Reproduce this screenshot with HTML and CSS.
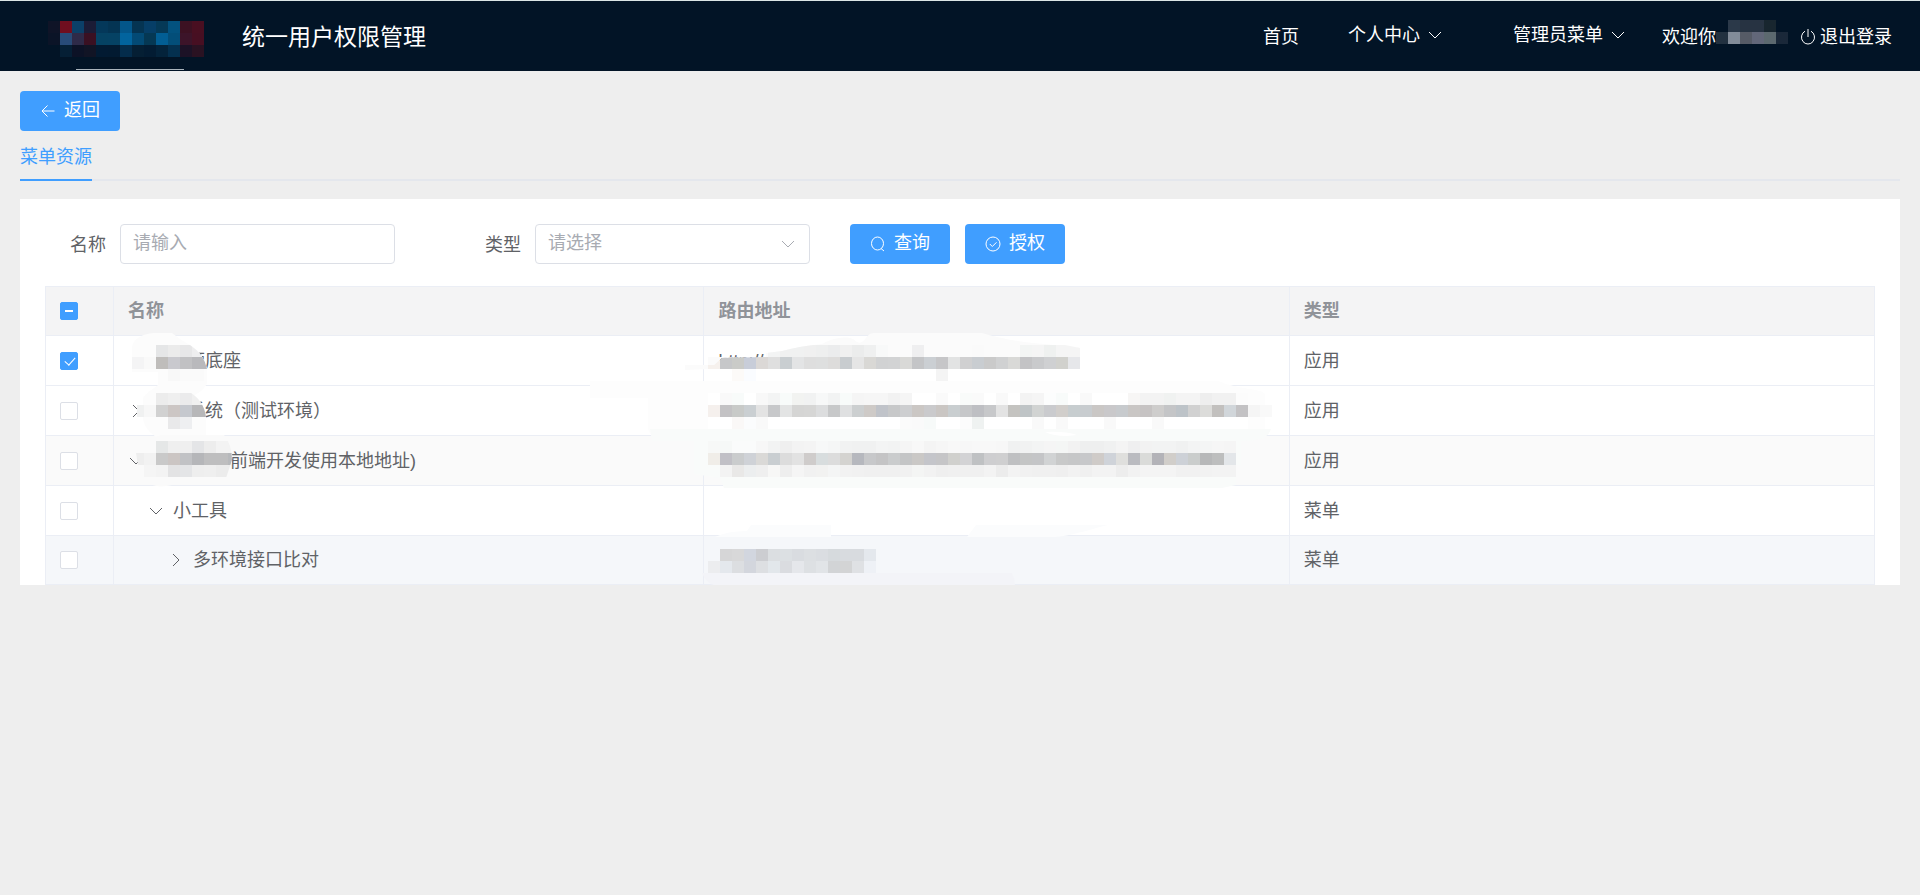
FILE: index.html
```html
<!DOCTYPE html>
<html lang="zh-CN">
<head>
<meta charset="utf-8">
<title>统一用户权限管理</title>
<link rel="stylesheet" href="styles.css">
</head>
<body>
<header class="topbar">
  <div class="brand">
    <svg class="logo" width="160" height="52" viewBox="44 18 160 52" aria-hidden="true">
      <g data-mosaic="logo"></g>
      <path d="M76 69.500H184" stroke="#aab4bc" stroke-width="1"/>
    </svg>
    <h1 class="title">统一用户权限管理</h1>
  </div>
  <nav class="nav">
    <a class="nav-link home" href="#">首页</a>
    <a class="nav-link menu" href="#">个人中心<svg class="chev" viewBox="0 0 16 16"><path d="M2 5l6 6 6-6"/></svg></a>
    <a class="nav-link menu admin" href="#">管理员菜单<svg class="chev" viewBox="0 0 16 16"><path d="M2 5l6 6 6-6"/></svg></a>
    <span class="welcome">欢迎你<svg class="user-mask" width="84" height="24" viewBox="1704 21 84 24" aria-hidden="true"><g data-mosaic="user"></g></svg></span>
    <a class="nav-link logout" href="#"><svg class="power" viewBox="0 0 16 18"><path d="M8 1v8M5 3.200a6.500 6.800 0 1 0 6 0"/></svg>退出登录</a>
  </nav>
</header>
<main class="page">
  <button class="btn back" type="button"><svg class="ico" viewBox="0 0 16 16"><path d="M14.500 8H2M7.500 2.500L2 8l5.500 5.500"/></svg>返回</button>
  <div class="tabs"><a class="tab" href="#">菜单资源</a></div>
  <section class="card">
    <form class="filters">
      <label class="label" for="name">名称</label>
      <input class="field" id="name" type="text" placeholder="请输入">
      <label class="label second" for="type">类型</label>
      <span class="select-wrap">
        <select class="field" id="type"><option>请选择</option></select>
        <svg class="chev" viewBox="0 0 16 16"><path d="M2 5l6 6 6-6"/></svg>
      </span>
      <div class="actions">
        <button class="btn" type="button"><svg class="ico" viewBox="0 0 16 16"><ellipse cx="7.500" cy="7.500" rx="6" ry="6.500"/><path d="M11 12.500l3 2.500"/></svg>查询</button>
        <button class="btn" type="button"><svg class="ico" viewBox="0 0 16 16"><circle cx="8" cy="8" r="7"/><path d="M4.800 8l2.500 2.500 4.200-4.200"/></svg>授权</button>
      </div>
    </form>
    <div class="table-wrap">
      <table class="grid">
        <colgroup><col class="c-check"><col><col class="c-wide"><col class="c-wide"></colgroup>
        <thead>
          <tr><th><input class="check partial" type="checkbox" aria-label="全选"></th><th>名称</th><th>路由地址</th><th>类型</th></tr>
        </thead>
        <tbody>
          <tr><td><input class="check" type="checkbox" checked aria-label="选择"></td><td><div class="node"><span class="toggle"></span><span class="gap"></span>频底座</div></td><td>http://</td><td>应用</td></tr>
          <tr><td><input class="check" type="checkbox" aria-label="选择"></td><td><div class="node"><svg class="toggle" viewBox="0 0 16 16"><path d="M5 2l6 6-6 6"/></svg><span class="gap"></span>系统（测试环境）</div></td><td></td><td>应用</td></tr>
          <tr class="striped"><td><input class="check" type="checkbox" aria-label="选择"></td><td><div class="node"><svg class="toggle" viewBox="0 0 16 16"><path d="M2 5l6 6 6-6"/></svg><span class="gap long"></span>前端开发使用本地地址)</div></td><td></td><td>应用</td></tr>
          <tr><td><input class="check" type="checkbox" aria-label="选择"></td><td><div class="node level-1"><svg class="toggle" viewBox="0 0 16 16"><path d="M2 5l6 6 6-6"/></svg>小工具</div></td><td></td><td>菜单</td></tr>
          <tr class="hovered"><td><input class="check" type="checkbox" aria-label="选择"></td><td><div class="node level-2"><svg class="toggle" viewBox="0 0 16 16"><path d="M5 2l6 6-6 6"/></svg>多环境接口比对</div></td><td></td><td>菜单</td></tr>
        </tbody>
      </table>
      <svg class="mask" width="1260" height="299" viewBox="45 286 1260 299" aria-hidden="true">
        <clipPath id="name-clip">
          <path d="M130 340H182L190 345Q204 354 207 369V383H130zM137 391H188Q204 400 206 417V430H137zM136 453L140 453V436H224Q232 444 232 460L226 478H140z"/>
        </clipPath>
        <clipPath id="url-clip">
          <path d="M700 365H714L722 358L766 357V353L782 351Q800 346 822 344H1060L1080 348V585H700z"/>
          <path d="M1080 385H1290V585H1080z"/>
        </clipPath>
        <path fill="#fcfcfc" d="M132 352C130 338 145 333 156 333h16L180 339L190 345Q204 354 207 368V383Q205 390 193 396Q204 404 206 417V438H158C148 432 143 425 143 417V398C148 391 152 390 158 385V372H132z"/>
        <path fill="#fafafa" d="M136 460V453h4c3-12 12-16 22-18h62c8 8 10 22 7 30l-6 12-53 8c-8 2-16 2-22-1L144 477V462z"/>
        <path fill="#fbfbfb" d="M685 370V365H714L722 358L766 357V353L782 351Q800 346 822 344C832 338 845 336 853 339c4 3 6 5 9 3 5-4 6-9 12-9h108c40 12 68 10 98 15v9H708v12z"/>
        <path fill="#fdfdfd" d="M590 381H1218C1240 390 1260 388 1265 394V429h-6l-18 12H700C660 441 650 438 648 429V398H590z"/>
        <path fill="#fff" d="M708 369H1100V381H708zM708 393H1248V429H708z"/>
        <path fill="#f9fbfa" d="M650 429H1271C1268 438 1260 441 1241 441v24H1236V485l-14 3H724l-4-10-26-4V441H652z"/>
        <path fill="#fff" d="M1045 432q20-1 32 3l-10 1q-14 0-22-4z"/>
        <path fill="#fbfcfd" d="M715 537q12-6 32-6l4-6h80v12zM967 537l9-12h132c-10 2-36 11-53 12z"/>
        <path fill="#f3f4f8" d="M702 573H1012q3 6 3 12H714q-8-2-12-12z"/>
        <g data-mosaic="names" clip-path="url(#name-clip)"></g>
        <g data-mosaic="urls" clip-path="url(#url-clip)"></g>
      </svg>
    </div>
  </section>
</main>
<script src="mosaic.js"></script>
</body>
</html>
```
FILE: styles.css
```css
* { box-sizing: border-box; }
body {
  margin: 0;
  min-height: 100vh;
  background: #eee;
  color: #606266;
  font: 400 18px/24px "Liberation Sans", "Noto Sans CJK SC", sans-serif;
}
svg { fill: none; stroke: none; flex: none; }
a { color: inherit; text-decoration: none; }
input, select, button { font: inherit; }

.topbar {
  display: flex;
  justify-content: space-between;
  height: 71px;
  background: #021426;
  border-top: 1px solid #dbe5e5;
  color: #fff;
  padding: 0 28px 0 44px;
}
.brand { display: flex; align-items: center; gap: 38px; }
.logo { margin-top: 16px; }
.title { margin: 0; padding-top: 2px; font-size: 23px; line-height: 32px; font-weight: 400; }
.nav { display: flex; align-items: center; padding-top: 2px; }
.nav-link { display: flex; align-items: center; }
.home { margin-right: 49px; }
.menu { gap: 7px; margin-right: 70px; padding-bottom: 4px; }
.admin { margin-right: 36px; }
.welcome { display: flex; align-items: center; position: relative; width: 138px; }
.user-mask { position: absolute; left: 42px; top: -5px; }
.logout { gap: 4px; }
.power { width: 16px; height: 18px; stroke: #fff; stroke-width: 1; }
.chev { width: 16px; height: 16px; stroke: currentColor; stroke-width: 1; }

.page { padding: 20px; }
.btn {
  display: inline-flex;
  align-items: center;
  justify-content: center;
  gap: 8px;
  width: 100px;
  height: 40px;
  padding: 0 0 2px;
  border: 0;
  border-radius: 4px;
  background: #409eff;
  color: #fff;
}
.ico { width: 16px; height: 16px; stroke: #fff; stroke-width: 1; margin-top: 2px; }
.back { display: flex; }
.tabs { display: flex; height: 50px; border-bottom: 2px solid #e4e7ed; }
.tab { height: 50px; padding-top: 14px; color: #409eff; border-bottom: 2px solid #409eff; }

.card { margin-top: 18px; padding: 25px 25px 0; background: #fff; }
.filters { display: flex; align-items: center; height: 40px; margin-bottom: 22px; padding-left: 25px; }
.label { width: 50px; padding-top: 2px; }
.second { margin-left: 90px; }
.field {
  width: 275px;
  height: 40px;
  padding: 0 12px 2px;
  border: 1px solid #dcdfe6;
  border-radius: 4px;
  background: #fff;
  color: #a8abb2;
  appearance: none;
  outline: 0;
}
.field::placeholder { color: #a8abb2; }
.select-wrap { position: relative; }
.select-wrap .chev { position: absolute; right: 14px; top: 12px; color: #a8abb2; }
.actions { display: flex; gap: 15px; margin-left: 40px; }

.table-wrap { position: relative; }
.grid { width: 100%; table-layout: fixed; border-collapse: collapse; }
.c-check { width: 68px; }
.c-wide { width: 32%; }
.grid th, .grid td {
  height: 50px;
  padding: 0 14px;
  border: 1px solid #ebeef5;
  text-align: left;
}
.grid th { height: 49px; background: #f4f4f5; color: #909399; font-weight: 700; }
.grid tr:last-child td { height: 49px; }
.striped { background: #fafafa; }
.hovered { background: #f5f7fa; }
.check {
  display: block;
  appearance: none;
  width: 18px;
  height: 18px;
  margin: 0;
  border: 1px solid #dcdfe6;
  border-radius: 2px;
  background: #fff;
}
.check:checked, .partial { border-color: #409eff; background: #409eff; }
.partial::after { content: ""; display: block; width: 8px; height: 2px; margin: 7px 4px; background: #fff; }
.check:checked::after {
  content: "";
  display: block;
  width: 5px;
  height: 9px;
  margin: 2px 0 0 6px;
  border: solid #fff;
  border-width: 0 1px 1px 0;
  transform: rotate(42deg);
}
.node { display: flex; align-items: center; }
.toggle { width: 16px; height: 16px; margin-right: 9px; stroke: #606266; stroke-width: 1; }
.level-1 { padding-left: 20px; }
.level-2 { padding-left: 40px; }
.gap { width: 34px; }
.long { width: 77px; }
.mask { position: absolute; left: 0; top: 0; pointer-events: none; }
```
FILE: mosaic.js
```js
// Rows of 12px tiles: x, y, then one colour per tile ("-" leaves a tile empty).
const TILE = 12;
const mosaics = {
  logo: [
    [48, 21, "0f1427 700e1f 0b4068 1b1c36 04385a 043453 03568a 053452 063e67 053957 03527f 3c1122 490f21"],
    [48, 33, "0b1427 284b78 2e2a48 3a1022 054263 054264 02649e 034a75 053854 025e94 034e79 3c1429 470f22"],
    [48, 45, "021426 051f35 0c1226 111425 021a32 021a31 042c4b 051f34 031c33 04233b 04304f 1c1226 2a1222"]
  ],
  user: [
    [1728, 21, "2b3949 273342 273342 18262f"],
    [1716, 33, "223140 828c99 565b66 626779 5c696f 1a2839"]
  ],
  names: [
    [156, 345, "e5e6e7 ebebeb e7e7e8 eeeeef f0f0f0"],
    [132, 357, "f4f4f5 f9f9f9 bfbdbb c9c9ce c1c1c3 b9b9bc b9b9bc"],
    [168, 369, "f8f8f8 fafafa fafafa"],
    [156, 393, "ececec efefef ebebec f0f0f0 f0f0f0"],
    [132, 405, "f0f1f1 f7f7f7 d1d1d1 ccc6c4 c5c8ce b7b7b9 b7b7b9"],
    [168, 417, "e9e9ea eeeff1"],
    [156, 441, "e5e7e7 efefef efefef e4e5e7 ededed f3f3f3 f3f3f3"],
    [132, 453, "eeeeee f2f2f2 c9c9c9 cbc5c3 c1c2c5 b5b6b9 bebebf bebebf b7b9bc"],
    [144, 465, "f5f5f5 f3f3f3 e3e3e4 e4e5e7 eeeeee efefef ececec ececec"]
  ],
  urls: [
    [768, 345, "f3f4f4 f0f1f1 f0f1f1 f0f0f0 eeefef ebeced f0f0f0 ebecec eff0f0 f8f9f9 - - efeff0 - - - - fafafa - - - f3f5f4 f5f5f5 eff1f0 f5f5f5 f5f5f5"],
    [708, 357, "f6f1ed c6c7c9 cacbc8 c8cdd9 dbd8d6 dfdfdf c9ced1 e3e4e5 dedede dedfdf dddcdb c8cccf e5e5e5 d9d8d5 d1d2d3 d2d3d4 d9d9d7 c4c5c7 cbcfd3 c6c6c8 e2e3e3 d0d0d1 c9cdd1 cacaca d0d1d2 d9d9d7 c3c3c5 c9cacc cfd0d2 d1d1cd e6e7ea"],
    [732, 369, "fcfaf8 fafcff - - - - - - - - - - - - - - - f4f4f4"],
    [720, 393, "f9f9f9 f8fbfa ffffff f8f8f8 f3f4f4 f8fbfa f2f3f1 f1f2f2 f7f8f8 f2f3f3 f8fbfa f5f5f5 f6f6f6 f6f6f6 f2f2f2 f5f5f5 - - fafafa - f9fbfa fafafa - f9f9f9 - f3f3f3 f5f5f5 fcfdfd f8fbfa - f9f9f9 - - - f7f6f5 f3f3f3 f3f3f3 f0f2f1 f4f4f4 f4f4f4 eeeeee f1f1f1 f1f1f1 fcfcfc"],
    [708, 405, "f5f0ed c3c2c4 c8cac8 cacfd2 e3e3e3 c7c8ca e3e4e4 d5d5d4 d6d6d5 dcddde c7c8c9 dfe0e1 cccfd0 cecac7 c0c3c9 c7c8c9 cdced0 cbc7c4 cacacc cac6c3 c9ced0 c6c7c9 bebfc3 c7c8ca e3e3e3 c4c3c0 bfc4c6 d1d3d2 cacbce d1cecb c7cdcf c8cccf cac7c5 c9c8ca c7cacd c9c6c4 c6c3c3 cecdcc c4c5c7 bdc3c8 d1d1d1 dcdcda c2c0be d1d6da c3c2c4 f5f5f5 f9f9f9"],
    [732, 417, "faf8f7 fbfcfd f9f9f9 - - - - - - - - - - - fbfbfb fafafa f7faf9 - - fcfcfc eff2f1 - - - - f9f9f9 - f9f9f9 - - - f9f9f9 - - - f9f9f9"],
    [708, 441, "f7f8f7 f6f8f7 fafbfb fafbfb f7f7f7 f2f3f3 efefef f3f3f3 f4f4f4 f7f8f8 f5f6f6 f1f2f2 f0f1f1 f0f1f1 f3f4f4 f2f3f3 f5f5f5 f8f8f8 f4f4f4 f6f6f6 f8f8f8 f7f7f7 f8f8f8 f8f8f8 f7f7f7 f0f1f1 f1f2f2 f3f4f4 f5f5f5 f4f6f5 f2f2f2 eeefef eeefef f0f1f1 f4f4f4 efeff0 f2f2f2 f2f3f3 f2f3f3 f0f1f1 f3f4f4 f4f5f5 f6f6f6 f5f5f5"],
    [708, 453, "f0ede8 c1c0c6 cacccd cfd2d7 dad9d7 c9ced1 dcdcdc e2e2e2 cfcccb d8ddde dcdcdc d4d3d0 b6b8be c7c8ca c4c4c5 cacccd c4c5c6 cac8c6 c4c5ca c5c5c7 d0d0cd d3d3d5 bfc1c3 ceced0 cfcfd0 bfc0c2 c4c5c5 c4c5c7 d1d3d4 c8c9c9 c6c7c8 c7c8ca cfcbc8 cfd3d9 dfdfdd babbc0 dadbd9 b3b3b8 d1ceca cdd1d7 cacdcc b7b8b9 bdbebe e3e6e9"],
    [720, 465, "f3f3f3 e9e8e7 eceeef efefef f7f7f6 eeeeee f5f5f5 f1f1f1 f2f2f1 f4f5f5 f2f2f2 f1f1f1 f0f0f0 f0f0f0 f0f0f0 f1f1f1 f4f5f4 f2f2f2 efefef f0f0f0 f0f0f0 f0f0f0 f3f3f3 ececec f3f3f3 f1f1f1 f0f0f0 f0f0f0 efefef f2f2f2 f0f0f0 f3f3f3 f3f3f3 ededed f2f2f2 f4f4f4 f4f4f4 f4f4f4 f1f1f1 f1f1f1 f2f2f2 f3f3f3 f3f3f3"],
    [720, 549, "d6d6d7 d8d8d9 d2d6df cccdd1 dbdee1 dce0e3 d9dce0 dcdfe2 dadde1 d6dadd d8dbdf d8dbdf e4e8ed"],
    [708, 561, "ecedef e4e8ed dcdee1 d3d6dd dddfe2 e2e7eb dadce0 e5e7eb dde0e3 e1e4e7 d2d4d6 d3d4d5 dfe1e4 eef1f6"]
  ]
};
document.querySelectorAll("[data-mosaic]").forEach(group => {
  mosaics[group.dataset.mosaic].forEach(([x, y, row]) => {
    row.split(" ").forEach((colour, i) => {
      if (colour === "-") return;
      const tile = document.createElementNS("http://www.w3.org/2000/svg", "rect");
      tile.setAttribute("x", x + i * TILE);
      tile.setAttribute("y", y);
      tile.setAttribute("width", TILE);
      tile.setAttribute("height", TILE);
      tile.setAttribute("fill", "#" + colour);
      group.append(tile);
    });
  });
});
```
